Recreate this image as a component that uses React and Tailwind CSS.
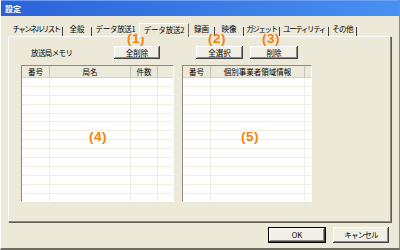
const JP = { fontFamily: "'Noto Sans CJK JP', 'Noto Sans', sans-serif" }

const tabs = [
  { label: 'チャンネルリスト', w: 'w-[53px]', tr: 'tracking-[-1.6px]' },
  { label: '全般', w: 'w-[29px]', tr: 'tracking-[0px]' },
  { label: 'データ放送1', w: 'w-[47px]', tr: 'tracking-[-0.3px]' },
  { label: 'データ放送2', w: 'w-[50px]', tr: 'tracking-[-0.2px]', active: true },
  { label: '録画', w: 'w-[26px]', tr: 'tracking-[0px]' },
  { label: '映像', w: 'w-[29px]', tr: 'tracking-[0px]' },
  { label: 'ガジェット', w: 'w-[36px]', tr: 'tracking-[-1.4px]' },
  { label: 'ユーティリティ', w: 'w-[49px]', tr: 'tracking-[-1.4px]' },
  { label: 'その他', w: 'w-[28px]', tr: 'tracking-[-0.7px]' },
]

function Btn({ children, className = '' }) {
  return (
    <div
      className={`flex items-center justify-center bg-[#f1efe6] text-[7.5px] leading-none text-black shadow-[inset_-1px_-1px_#404040,inset_1px_1px_#ffffff,inset_-2px_-2px_#8c8a80] ${className}`}
    >
      {children}
    </div>
  )
}

function Num({ children, className = '' }) {
  return (
    <div
      className={`absolute text-[13.5px] font-bold leading-none tracking-[0.5px] text-[#f5820a] ${className}`}
      style={{ fontFamily: "'Liberation Sans', Arial, sans-serif" }}
    >
      {children}
    </div>
  )
}

function ListView({ cols, width }) {
  const rows = Array.from({ length: 14 })
  return (
    <div
      className="flex h-[137px] flex-col overflow-hidden border-t border-l border-t-[#8c8a80] border-l-[#8c8a80] border-r border-b border-r-white border-b-white bg-white"
      style={{ width }}
    >
      <div className="flex h-[12px] shrink-0 bg-[#ebeadb] border-b border-[#d6d2c2]">
        {cols.map((c, i) => (
          <div
            key={i}
            className="flex items-center justify-center border-r border-[#c7c3b0] text-[7.5px] text-black"
            style={{ width: c.w }}
          >
            {c.label}
          </div>
        ))}
        <div className="flex-1" />
      </div>
      <div className="flex flex-1">
        {cols.map((c, i) => (
          <div key={i} className="flex flex-col border-r border-[#f0eee2]" style={{ width: c.w }}>
            {rows.map((_, j) => (
              <div key={j} className="h-[8.9px] shrink-0 border-b border-[#f0eee2]" />
            ))}
          </div>
        ))}
        <div className="flex flex-1 flex-col">
          {rows.map((_, j) => (
            <div key={j} className="h-[8.9px] shrink-0 border-b border-[#f0eee2]" />
          ))}
        </div>
      </div>
    </div>
  )
}

export default function App() {
  return (
    <div className="relative flex h-[250px] w-[400px] flex-col bg-[#ece9d8] border-b-2 border-[#6f6d62] border-l border-l-white border-r border-r-[#8c8a80]" style={JP}>
      {/* title bar */}
      <div className="flex h-[16px] shrink-0 items-center bg-gradient-to-r from-[#2c62d8] to-[#4890f2] pl-[4px] border-t border-[#6ea0f5]">
        <span className="text-[8px] font-bold text-white">設定</span>
      </div>

      {/* tabs */}
      <div className="mt-[6px] flex h-[14px] items-end pl-[9px]">
        {tabs.map((t, i) =>
          t.active ? (
            <div
              key={t.label}
              className={`relative z-10 -mb-[1px] flex h-[14px] items-start justify-center pt-[2px] bg-[#ece9d8] text-[7.5px] leading-none text-black border-t border-l border-white border-r border-r-[#6f6d62] ${t.w} ${t.tr}`}
            >
              {t.label}
            </div>
          ) : (
            <div
              key={t.label}
              className={`flex h-[9px] items-center justify-center whitespace-nowrap text-[7.5px] leading-none text-black ${t.w} ${t.tr} ${tabs[i + 1]?.active ? '' : 'border-r border-[#404040]'}`}
            >
              <span className="-mt-[5px]">{t.label}</span>
            </div>
          )
        )}
      </div>

      {/* panel */}
      <div className="ml-[7px] h-[186px] w-[383px] border-t border-l border-white border-r border-b border-r-[#8c8a80] border-b-[#8c8a80] shadow-[1px_1px_#5f5d54]">
        <div className="flex gap-[8px] pl-[12px] pt-[9px]">
          {/* left column */}
          <div className="flex flex-col gap-[6px]">
            <div className="flex h-[13px] items-center">
              <div className="w-[93px] pl-[10px] text-[7.5px] leading-none tracking-[-0.6px] text-black">放送局メモリ</div>
              <Btn className="h-[13px] w-[46px]">全削除</Btn>
            </div>
            <ListView
              width={153}
              cols={[
                { label: '番号', w: 28 },
                { label: '局名', w: 81 },
                { label: '件数', w: 27 },
              ]}
            />
          </div>
          {/* right column */}
          <div className="flex flex-col gap-[6px]">
            <div className="flex h-[13px] items-center gap-[7px] pl-[14px]">
              <Btn className="h-[13px] w-[47px]">全選択</Btn>
              <Btn className="h-[13px] w-[48px]">削除</Btn>
            </div>
            <ListView
              width={130}
              cols={[
                { label: '番号', w: 28 },
                { label: '個別事業者領域情報', w: 94 },
              ]}
            />
          </div>
        </div>
      </div>

      {/* bottom buttons */}
      <div className="mt-[5px] flex justify-end gap-[7px] pr-[10px]">
        <Btn className="h-[16px] w-[58px] outline outline-1 outline-black -outline-offset-1 shadow-[inset_-2px_-2px_#404040,inset_2px_2px_#ffffff,inset_-3px_-3px_#8c8a80]">OK</Btn>
        <Btn className="h-[16px] w-[56px] tracking-[-0.8px]">キャンセル</Btn>
      </div>

      <Num className="left-[126px] top-[32px]">(1)</Num>
      <Num className="left-[207px] top-[32px]">(2)</Num>
      <Num className="left-[261px] top-[32px]">(3)</Num>
      <Num className="left-[88px] top-[130px]">(4)</Num>
      <Num className="left-[240px] top-[130px]">(5)</Num>
    </div>
  )
}
